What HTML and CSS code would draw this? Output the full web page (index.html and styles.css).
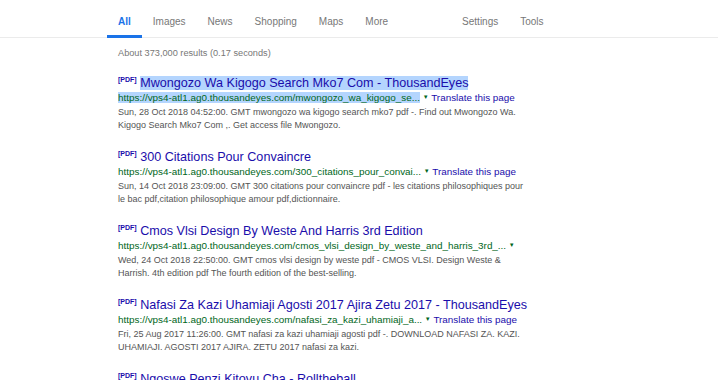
FILE: index.html
```html
<!DOCTYPE html>
<html lang="en">
<head>
    <meta charset="UTF-8">
    <title>Search results</title>
    <link rel="stylesheet" href="styles.css">
</head>
<body>
    <div class="nav">
        <div class="tabs">
            <a class="tab active">All</a>
            <a class="tab">Images</a>
            <a class="tab">News</a>
            <a class="tab">Shopping</a>
            <a class="tab">Maps</a>
            <a class="tab">More</a>
        </div>
        <div class="tabs right">
            <a class="tab">Settings</a>
            <a class="tab">Tools</a>
        </div>
    </div>

    <div class="content">
        <div class="stats">About 373,000 results (0.17 seconds)</div>

        <div class="result">
            <h3><span class="pdf">[PDF]</span> <span class="sel">Mwongozo Wa Kigogo Search Mko7 Com - ThousandEyes</span></h3>
            <div class="url"><span class="sel">https://vps4-atl1.ag0.thousandeyes.com/mwongozo_wa_kigogo_se...</span> <span class="arrow">▼</span> <a class="translate">Translate this page</a></div>
            <div class="snippet">Sun, 28 Oct 2018 04:52:00. GMT mwongozo wa kigogo search mko7 pdf -. Find out Mwongozo Wa. Kigogo Search Mko7 Com ,. Get access file Mwongozo.</div>
        </div>

        <div class="result">
            <h3><span class="pdf">[PDF]</span> 300 Citations Pour Convaincre</h3>
            <div class="url">https://vps4-atl1.ag0.thousandeyes.com/300_citations_pour_convai... <span class="arrow">▼</span> <a class="translate">Translate this page</a></div>
            <div class="snippet">Sun, 14 Oct 2018 23:09:00. GMT 300 citations pour convaincre pdf - les citations philosophiques pour le bac pdf,citation philosophique amour pdf,dictionnaire.</div>
        </div>

        <div class="result">
            <h3><span class="pdf">[PDF]</span> Cmos Vlsi Design By Weste And Harris 3rd Edition</h3>
            <div class="url">https://vps4-atl1.ag0.thousandeyes.com/cmos_vlsi_design_by_weste_and_harris_3rd_... <span class="arrow">▼</span></div>
            <div class="snippet">Wed, 24 Oct 2018 22:50:00. GMT cmos vlsi design by weste pdf - CMOS VLSI. Design Weste &amp; Harrish. 4th edition pdf The fourth edition of the best-selling.</div>
        </div>

        <div class="result">
            <h3><span class="pdf">[PDF]</span> Nafasi Za Kazi Uhamiaji Agosti 2017 Ajira Zetu 2017 - ThousandEyes</h3>
            <div class="url">https://vps4-atl1.ag0.thousandeyes.com/nafasi_za_kazi_uhamiaji_a... <span class="arrow">▼</span> <a class="translate">Translate this page</a></div>
            <div class="snippet">Fri, 25 Aug 2017 11:26:00. GMT nafasi za kazi uhamiaji agosti pdf -. DOWNLOAD NAFASI ZA. KAZI. UHAMIAJI. AGOSTI 2017 AJIRA. ZETU 2017 nafasi za kazi.</div>
        </div>

        <div class="result">
            <h3><span class="pdf">[PDF]</span> Ngoswe Penzi Kitovu Cha - Rolltheball</h3>
        </div>
    </div>
</body>
</html>
```

FILE: styles.css
```css
body {
    margin: 0;
    font-family: 'Liberation Sans', Arial, sans-serif;
    background: #fff;
    overflow: hidden;
}
.nav {
    display: flex;
    height: 37px;
    border-bottom: 1px solid #ebebeb;
    padding-left: 107px;
}
.tabs {
    display: flex;
}
.tabs.right {
    margin-left: 52px;
}
.tab {
    font-size: 10px;
    color: #777;
    padding: 16px 11px 0;
    height: 19px;
    border-bottom: 3px solid transparent;
}
.tab.active {
    color: #1a73e8;
    font-weight: bold;
    border-bottom-color: #1a73e8;
}
.content {
    padding-left: 118px;
    width: 412px;
}
.stats {
    font-size: 9.2px;
    color: #777;
    margin-top: 10px;
    margin-bottom: 17px;
}
.result {
    height: 74px;
}
.result h3 {
    margin: 0;
    font-size: 12.6px;
    font-weight: normal;
    color: #1a0dab;
    line-height: 16px;
    white-space: nowrap;
}
.pdf {
    font-size: 7px;
    font-weight: bold;
    vertical-align: top;
    line-height: 10px;
}
.sel {
    background: #b4d5fe;
}
.url {
    font-size: 9.9px;
    color: #006621;
    line-height: 13px;
    white-space: nowrap;
}
.arrow {
    font-size: 6px;
    vertical-align: 2px;
}
.translate {
    color: #1a0dab;
}
.snippet {
    font-size: 9px;
    color: #545454;
    line-height: 13px;
    margin-top: 2px;
}
```
